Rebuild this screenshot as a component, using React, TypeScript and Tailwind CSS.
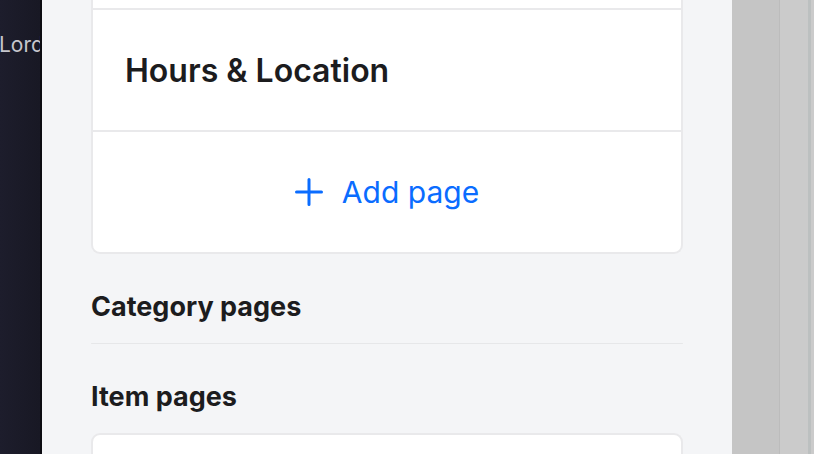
import React from "react";

const PlusIcon = () => (
  <svg width="28" height="28" viewBox="0 0 28 28" fill="none">
    <path d="M14 1.5v25M1.5 14h25" stroke="#0a6cff" strokeWidth="3" strokeLinecap="round" />
  </svg>
);

export default function App() {
  return (
    <div
      className="w-[814px] h-[454px] flex overflow-hidden"
      style={{ fontFamily: "Inter, 'Noto Sans', sans-serif" }}
    >
      <div className="w-[40px] shrink-0 bg-gradient-to-r from-[#1d1d2c] to-[#181824] overflow-hidden">
        <div className="mt-[33px] -ml-[1px] text-[21px] leading-[24px] text-[#c6c6cc] whitespace-nowrap">Lord</div>
      </div>
      <div className="w-[2px] shrink-0 bg-[#0c0c12]" />

      <div className="w-[690px] shrink-0 bg-[#f4f5f7] px-[49px] flex flex-col">
        <div className="bg-white border-2 border-t-0 border-[#e9e9eb] rounded-b-[9px] flex flex-col">
          <div className="h-[10px] border-b-2 border-[#e9e9eb]" />
          <div className="h-[122px] flex items-center px-[32px] pt-[1px] border-b-2 border-[#e9e9eb]">
            <span className="text-[32px] font-semibold text-[#1c1c1e]">Hours &amp; Location</span>
          </div>
          <div className="h-[120px] flex items-center justify-center gap-[19px]">
            <PlusIcon />
            <span className="text-[30px] text-[#0a6cff]">Add page</span>
          </div>
        </div>

        <h2 className="mt-[39px] text-[27px] leading-none font-bold text-[#1c1c1e]">Category pages</h2>
        <div className="mt-[23px] h-[3px] rounded-full bg-[#e6e7e9]" />

        <h2 className="mt-[39px] text-[27px] leading-none font-bold text-[#1c1c1e]">Item pages</h2>
        <div className="mt-[23px] h-[40px] bg-white border-2 border-b-0 border-[#e9e9eb] rounded-t-[9px]" />
      </div>

      <div className="w-[47px] shrink-0 bg-[#c5c5c5]" />
      <div className="w-px shrink-0 bg-[#bcbcbc]" />
      <div className="w-[28px] shrink-0 bg-[#cbcbcb]" />
      <div className="w-[3px] shrink-0 bg-[#bcc0c0]" />
      <div className="flex-1 bg-[#cbcbcb]" />
    </div>
  );
}
